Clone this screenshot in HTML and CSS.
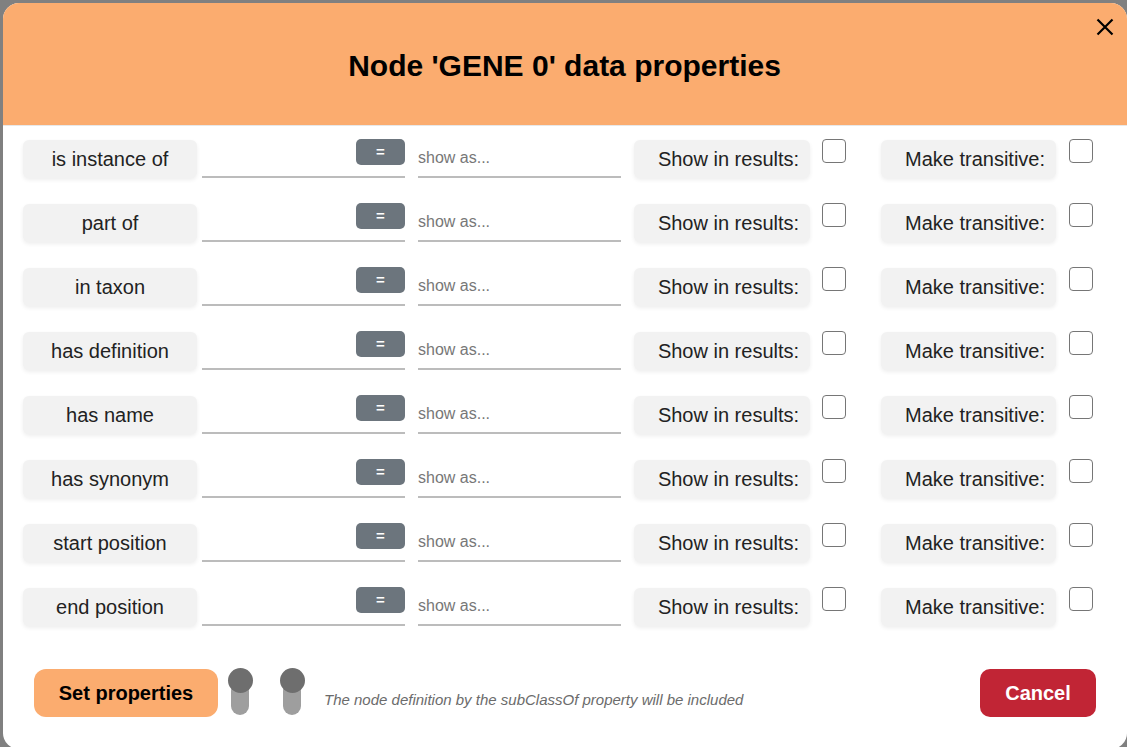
FILE: index.html
```html
<!DOCTYPE html>
<html lang="en">
<head>
<meta charset="utf-8">
<title>Node data properties</title>
<link rel="stylesheet" href="styles.css">
</head>
<body>
<div class="modal">
  <div class="modal-header">
    <h3 class="title">Node 'GENE 0' data properties</h3>
    <button class="close" aria-label="Close">
      <svg width="18" height="18" viewBox="0 0 18 18"><path d="M1.5 1.5 L16.5 16.5 M16.5 1.5 L1.5 16.5" stroke="#000" stroke-width="2.2" fill="none"/></svg>
    </button>
  </div>
  <div class="modal-body">
    <div class="row"><div class="label">is instance of</div><div class="field"><span class="eq">=</span></div><div class="field show">show as...</div><div class="box">Show in results:</div><span class="check"></span><div class="box box2">Make transitive:</div><span class="check check2"></span></div>
    <div class="row"><div class="label">part of</div><div class="field"><span class="eq">=</span></div><div class="field show">show as...</div><div class="box">Show in results:</div><span class="check"></span><div class="box box2">Make transitive:</div><span class="check check2"></span></div>
    <div class="row"><div class="label">in taxon</div><div class="field"><span class="eq">=</span></div><div class="field show">show as...</div><div class="box">Show in results:</div><span class="check"></span><div class="box box2">Make transitive:</div><span class="check check2"></span></div>
    <div class="row"><div class="label">has definition</div><div class="field"><span class="eq">=</span></div><div class="field show">show as...</div><div class="box">Show in results:</div><span class="check"></span><div class="box box2">Make transitive:</div><span class="check check2"></span></div>
    <div class="row"><div class="label">has name</div><div class="field"><span class="eq">=</span></div><div class="field show">show as...</div><div class="box">Show in results:</div><span class="check"></span><div class="box box2">Make transitive:</div><span class="check check2"></span></div>
    <div class="row"><div class="label">has synonym</div><div class="field"><span class="eq">=</span></div><div class="field show">show as...</div><div class="box">Show in results:</div><span class="check"></span><div class="box box2">Make transitive:</div><span class="check check2"></span></div>
    <div class="row"><div class="label">start position</div><div class="field"><span class="eq">=</span></div><div class="field show">show as...</div><div class="box">Show in results:</div><span class="check"></span><div class="box box2">Make transitive:</div><span class="check check2"></span></div>
    <div class="row"><div class="label">end position</div><div class="field"><span class="eq">=</span></div><div class="field show">show as...</div><div class="box">Show in results:</div><span class="check"></span><div class="box box2">Make transitive:</div><span class="check check2"></span></div>
  </div>
  <div class="modal-footer">
    <button class="btn btn-set">Set properties</button>
    <span class="toggle"><span class="knob"></span></span>
    <span class="toggle toggle2"><span class="knob"></span></span>
    <span class="note">The node definition by the subClassOf property will be included</span>
    <button class="btn btn-cancel">Cancel</button>
  </div>
</div>
</body>
</html>
```
FILE: styles.css
```css
html, body {
  margin: 0;
  padding: 0;
  height: 100%;
  overflow: hidden;
}
body {
  background: #808080;
  font-family: "Liberation Sans", Arial, sans-serif;
  color: #212529;
  padding: 3px 0 0 3px;
  box-sizing: border-box;
}
.modal {
  width: 1124px;
  height: 746px;
  background: #fff;
  border-radius: 16px;
  overflow: hidden;
  display: flex;
  flex-direction: column;
}
.modal-header {
  position: relative;
  height: 122px;
  background: #fbac6f;
  border-bottom: 1px solid #e8e8e8;
  display: flex;
  align-items: center;
  justify-content: center;
}
.title {
  margin: 3px 0 0 0;
  font-size: 30px;
  font-weight: bold;
  color: #000;
  padding-right: 1px;
}
.close {
  position: absolute;
  top: 15px;
  right: 13px;
  width: 18px;
  height: 18px;
  padding: 0;
  border: none;
  background: none;
  display: flex;
}
.modal-body {
  padding: 14px 0 0 20px;
  display: flex;
  flex-direction: column;
  gap: 26px;
}
.row {
  display: flex;
  align-items: flex-start;
  height: 38px;
}
.label, .box {
  height: 38px;
  background: #f2f2f2;
  border-radius: 6px;
  box-shadow: 0 2px 4px rgba(0, 0, 0, 0.07);
  display: flex;
  align-items: center;
  justify-content: center;
  font-size: 20px;
  color: #222;
}
.label {
  width: 174px;
}
.field {
  width: 203px;
  height: 38px;
  margin-left: 5px;
  box-sizing: border-box;
  border-bottom: 2px solid #bcbcbc;
  display: flex;
  justify-content: flex-end;
  align-items: flex-start;
}
.eq {
  width: 49px;
  height: 26px;
  margin-top: -1px;
  background: #6c757d;
  border-radius: 5px;
  color: #fff;
  font-weight: bold;
  font-size: 15px;
  display: flex;
  align-items: center;
  justify-content: center;
  padding-bottom: 2px;
  box-sizing: border-box;
}
.field.show {
  margin-left: 13px;
  justify-content: flex-start;
  align-items: center;
  font-size: 16px;
  color: #777;
}
.box {
  width: 176px;
  margin-left: 13px;
  padding-left: 13px;
  box-sizing: border-box;
}
.box2 {
  width: 175px;
  margin-left: 35px;
}
.check {
  width: 24px;
  height: 24px;
  margin-left: 12px;
  margin-top: -1px;
  box-sizing: border-box;
  border: 1px solid #767676;
  border-radius: 4px;
  background: #fff;
}
.check2 {
  margin-left: 13px;
}
.modal-footer {
  margin-top: auto;
  padding: 0 31px 32px 31px;
  display: flex;
  align-items: flex-start;
}
.btn {
  height: 48px;
  border: none;
  border-radius: 12px;
  font-family: "Liberation Sans", Arial, sans-serif;
  font-size: 20px;
  font-weight: bold;
  padding: 0;
}
.btn-set {
  width: 184px;
  background: #fbac6f;
  color: #000;
  margin-top: 1px;
}
.toggle {
  position: relative;
  width: 25px;
  height: 47px;
  margin-left: 10px;
}
.toggle::before {
  content: "";
  position: absolute;
  left: 3px;
  top: 14px;
  width: 18px;
  height: 33px;
  border-radius: 9px;
  background: #9e9e9e;
}
.knob {
  position: absolute;
  left: 0;
  top: 0;
  width: 25px;
  height: 25px;
  border-radius: 50%;
  background: #6e6e6e;
}
.toggle2 {
  margin-left: 27px;
}
.note {
  margin-left: 19px;
  margin-top: 23px;
  font-size: 15px;
  font-style: italic;
  color: #6b6b6b;
}
.btn-cancel {
  margin-left: auto;
  margin-top: 1px;
  width: 116px;
  background: #c12535;
  color: #fff;
  border-radius: 10px;
}
```
